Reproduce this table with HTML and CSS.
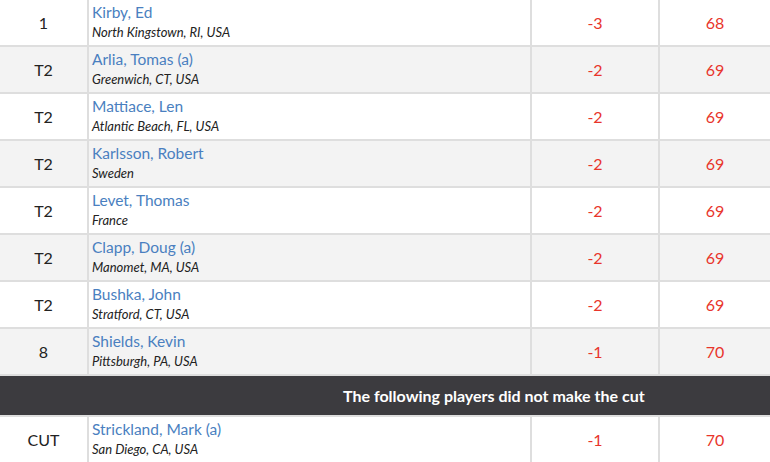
FILE: index.html
```html
<!DOCTYPE html>
<html>
<head>
<meta charset="utf-8">
<link rel="stylesheet" href="styles.css">
</head>
<body>
<table class="board">
  <colgroup>
    <col class="c-pos"><col class="c-player"><col class="c-score"><col class="c-total">
  </colgroup>
  <tbody>
    <tr class="row">
      <td class="pos">1</td>
      <td class="player"><a class="name">Kirby, Ed</a><span class="loc">North Kingstown, RI, USA</span></td>
      <td class="score">-3</td><td class="total">68</td>
    </tr>
    <tr class="row alt">
      <td class="pos">T2</td>
      <td class="player"><a class="name">Arlia, Tomas (a)</a><span class="loc">Greenwich, CT, USA</span></td>
      <td class="score">-2</td><td class="total">69</td>
    </tr>
    <tr class="row">
      <td class="pos">T2</td>
      <td class="player"><a class="name">Mattiace, Len</a><span class="loc">Atlantic Beach, FL, USA</span></td>
      <td class="score">-2</td><td class="total">69</td>
    </tr>
    <tr class="row alt">
      <td class="pos">T2</td>
      <td class="player"><a class="name">Karlsson, Robert</a><span class="loc">Sweden</span></td>
      <td class="score">-2</td><td class="total">69</td>
    </tr>
    <tr class="row">
      <td class="pos">T2</td>
      <td class="player"><a class="name">Levet, Thomas</a><span class="loc">France</span></td>
      <td class="score">-2</td><td class="total">69</td>
    </tr>
    <tr class="row alt">
      <td class="pos">T2</td>
      <td class="player"><a class="name">Clapp, Doug (a)</a><span class="loc">Manomet, MA, USA</span></td>
      <td class="score">-2</td><td class="total">69</td>
    </tr>
    <tr class="row">
      <td class="pos">T2</td>
      <td class="player"><a class="name">Bushka, John</a><span class="loc">Stratford, CT, USA</span></td>
      <td class="score">-2</td><td class="total">69</td>
    </tr>
    <tr class="row alt">
      <td class="pos">8</td>
      <td class="player"><a class="name">Shields, Kevin</a><span class="loc">Pittsburgh, PA, USA</span></td>
      <td class="score">-1</td><td class="total">70</td>
    </tr>
    <tr class="cut">
      <td colspan="4" class="cut-cell">The following players did not make the cut</td>
    </tr>
    <tr class="row">
      <td class="pos">CUT</td>
      <td class="player"><a class="name">Strickland, Mark (a)</a><span class="loc">San Diego, CA, USA</span></td>
      <td class="score">-1</td><td class="total">70</td>
    </tr>
  </tbody>
</table>
</body>
</html>
```

FILE: styles.css
```css
html, body {
  margin: 0;
  padding: 0;
  background: #ffffff;
}
body {
  font-family: Lato, "Open Sans", "Liberation Sans", sans-serif;
  color: #222222;
}
.board {
  width: 770px;
  border-collapse: collapse;
  table-layout: fixed;
}
.c-pos { width: 88px; }
.c-player { width: 443px; }
.c-score { width: 128px; }
.c-total { width: 111px; }

.row td {
  height: 45px;
  padding: 0;
  border-bottom: 2px solid #dedede;
  vertical-align: middle;
}
.row td + td {
  border-left: 2px solid #dedede;
}
.row.alt td {
  background: #f3f3f3;
}
.pos {
  text-align: center;
  font-size: 16px;
  color: #222;
}
.player {
  padding-left: 3px !important;
}
.name {
  display: block;
  color: #4a7fc0;
  font-size: 15.5px;
  line-height: 19px;
}
.loc {
  display: block;
  font-style: italic;
  font-size: 13px;
  line-height: 21px;
  color: #222222;
}
.score, .total {
  text-align: center;
  font-size: 16px;
  color: #e8352b;
}
.cut-cell {
  height: 39px;
  padding: 0 0 0 343px;
  background: #3c3b3f;
  color: #ffffff;
  font-weight: 700;
  font-size: 16px;
  border-bottom: 2px solid #dedede;
}
```
